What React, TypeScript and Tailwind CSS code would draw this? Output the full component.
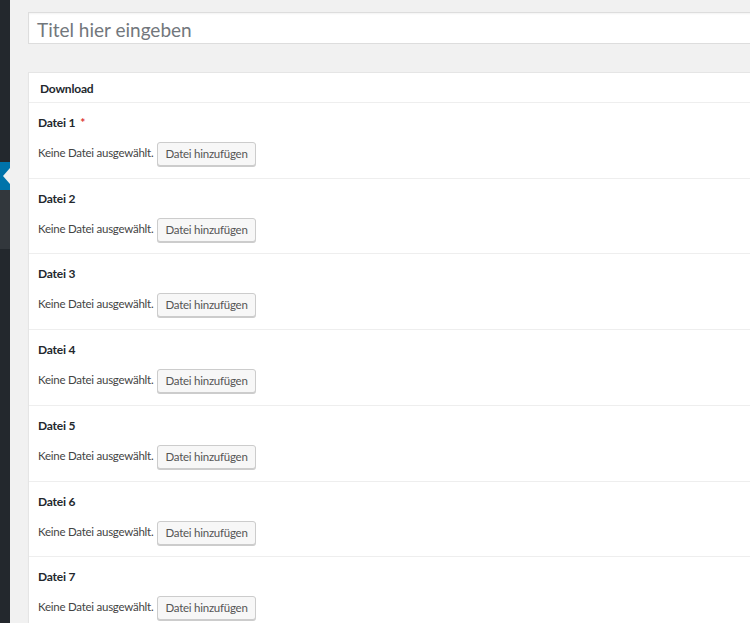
import React from 'react'

const font = { fontFamily: 'Lato, "Noto Sans", Arial, sans-serif' }

function FileRow({ n, required, short }: { n: number; required?: boolean; short?: boolean }) {
  return (
    <div className={`border-t border-[#eeeeee] px-[9px] pt-[11px] ${short ? 'h-[75px]' : 'h-[76px]'}`}>
      <div className="text-[12px] leading-[18px] font-bold text-[#23282d] tracking-[-0.2px]">
        Datei {n}
        {required && <span className="text-[#dc3232] ml-[5px]">*</span>}
      </div>
      <div className="mt-[10px] flex items-center text-[11.5px] text-[#444] tracking-[-0.25px]">
        <span className="-mt-[3px]">Keine Datei ausgewählt.</span>
        <button className="ml-[4px] h-[24px] px-[7px] rounded-[3px] border border-[#cccccc] bg-[#f7f7f7] text-[11.5px] text-[#555] tracking-[-0.25px] shadow-[0_1px_0_#cccccc]">
          Datei hinzufügen
        </button>
      </div>
    </div>
  )
}

export default function App() {
  return (
    <div className="flex h-[623px] w-[750px] overflow-hidden bg-[#f1f1f1]" style={font}>
      {/* Admin sidebar edge */}
      <div className="w-[10px] flex-shrink-0 bg-[#23282d] flex flex-col">
        <div className="h-[162px]" />
        <div className="h-[28px] bg-[#0073aa] relative">
          <div className="absolute right-0 top-[6px] w-0 h-0 border-y-[8px] border-y-transparent border-r-[7px] border-r-[#f1f1f1]" />
        </div>
        <div className="h-[59px] bg-[#32373c]" />
      </div>

      {/* Main content */}
      <div className="flex-1 pl-[18px] pt-[12px] -mr-[30px]">
        <div className="h-[32px] border border-[#dddddd] bg-white flex items-center px-[8px] pt-[4px] text-[19px] text-[#72777c] shadow-[inset_0_1px_2px_rgba(0,0,0,0.05)]">
          Titel hier eingeben
        </div>

        <div className="mt-[28px] border border-[#e5e5e5] bg-white shadow-[0_1px_1px_rgba(0,0,0,0.04)]">
          <div className="h-[29px] flex items-center px-[11px] pt-[3px] text-[12px] font-bold text-[#23282d] tracking-[-0.2px]">
            Download
          </div>
          <FileRow n={1} required />
          <FileRow n={2} short />
          <FileRow n={3} />
          <FileRow n={4} />
          <FileRow n={5} />
          <FileRow n={6} short />
          <FileRow n={7} />
        </div>
      </div>
    </div>
  )
}
